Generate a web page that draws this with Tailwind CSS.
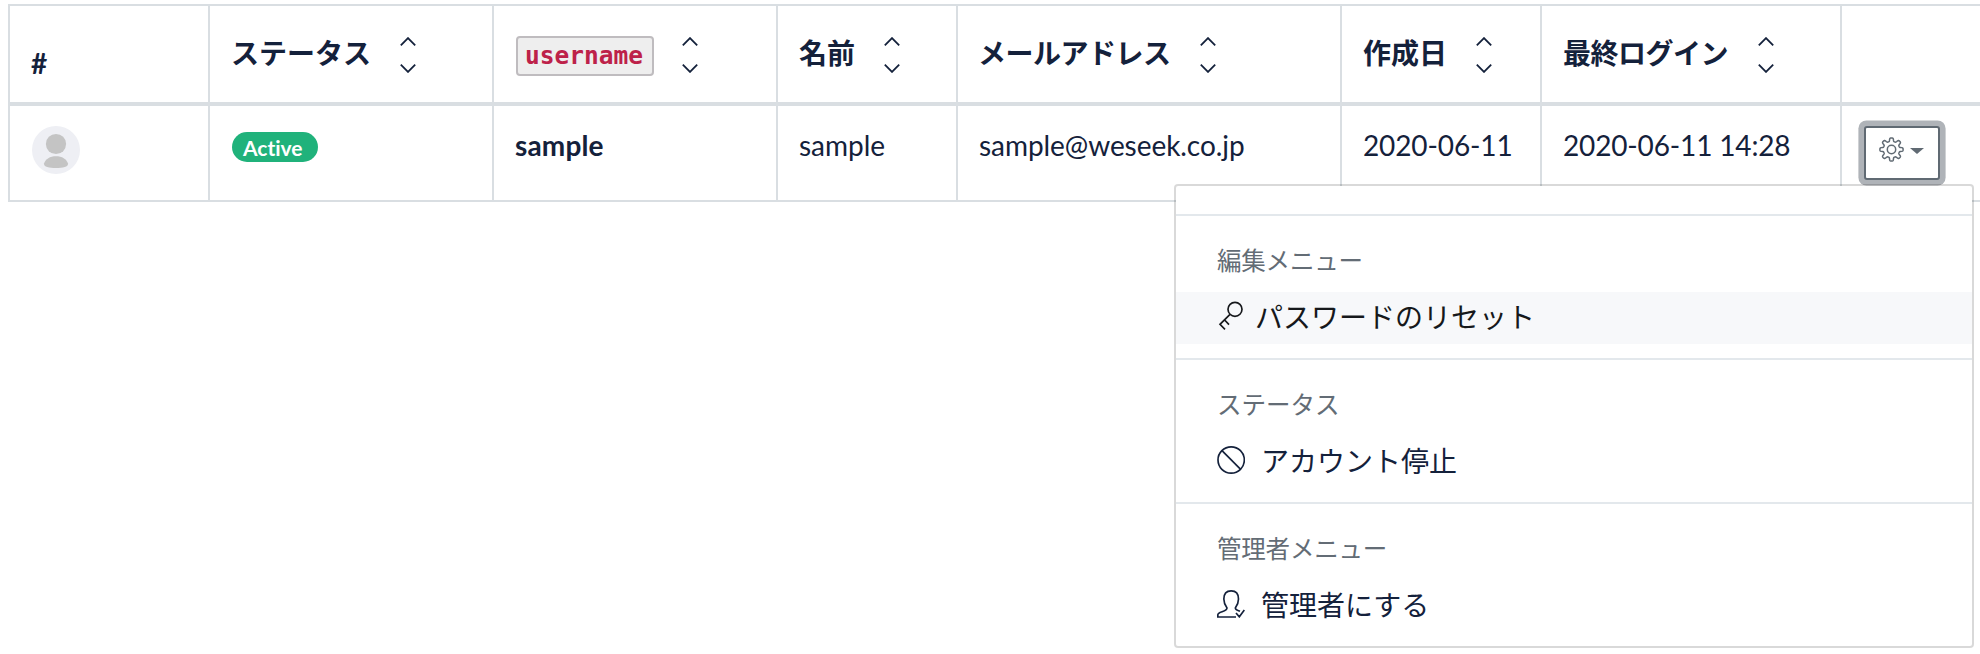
<!DOCTYPE html>
<html lang="ja">
<head>
<meta charset="utf-8">
<title>Users</title>
<script src="https://cdn.jsdelivr.net/npm/@tailwindcss/browser@4"></script>
</head>
<body class="relative h-[654px] w-[1980px] overflow-hidden bg-white font-['Lato','Noto_Sans_CJK_JP',sans-serif] text-[28px] leading-[42px] text-[#14213b]">
<svg class="hidden">
  <symbol id="sort" viewBox="0 0 16 36"><path d="M.8 8.3 8 1.1l7.2 7.2M.8 27.7 8 34.9l7.2-7.2" fill="none" stroke="currentColor" stroke-width="1.8"/></symbol>
</svg>
<main class="ml-2 pt-1">
  <div class="grid h-[102px] grid-cols-[200px_284px_284px_180px_384px_200px_300px_140px] border-t-2 border-b-4 border-[#d9dee2] font-bold whitespace-nowrap">
    <div class="border-l-2 border-[#d9dee2] pt-[36px] pl-[21px]">#</div>
    <div class="flex items-start border-l-2 border-[#d9dee2] pl-[21px]"><span class="mt-[26px] w-[169px]">ステータス</span><svg class="mt-[31px] h-9 w-4"><use href="#sort"/></svg></div>
    <div class="flex items-start border-l-2 border-[#d9dee2] pl-[22px]"><span class="w-[166px] pt-[30px]"><code class="block h-10 w-[138px] rounded-[4px] border-2 border-[#bfbcbf] bg-[#eee] pl-[7px] font-['DejaVu_Sans_Mono',monospace] text-[24.5px] leading-[36px] text-[#bd2149]">username</code></span><svg class="mt-[31px] h-9 w-4"><use href="#sort"/></svg></div>
    <div class="flex items-start border-l-2 border-[#d9dee2] pl-[21px]"><span class="mt-[26px] w-[85px]">名前</span><svg class="mt-[31px] h-9 w-4"><use href="#sort"/></svg></div>
    <div class="flex items-start border-l-2 border-[#d9dee2] pl-[20px]"><span class="mt-[26px] w-[222px] tracking-[-0.5px]">メールアドレス</span><svg class="mt-[31px] h-9 w-4"><use href="#sort"/></svg></div>
    <div class="flex items-start border-l-2 border-[#d9dee2] pl-[21px]"><span class="mt-[26px] w-[113px]">作成日</span><svg class="mt-[31px] h-9 w-4"><use href="#sort"/></svg></div>
    <div class="flex items-start border-l-2 border-[#d9dee2] pl-[21px]"><span class="mt-[26px] w-[195px] tracking-[-0.5px]">最終ログイン</span><svg class="mt-[31px] h-9 w-4"><use href="#sort"/></svg></div>
    <div class="border-l-2 border-[#d9dee2]"></div>
  </div>
  <div class="grid h-[96px] grid-cols-[200px_284px_284px_180px_384px_200px_300px_140px] border-b-2 border-[#d9dee2] whitespace-nowrap">
    <div class="border-l-2 border-[#d9dee2] pt-5 pl-[22px]">
      <svg class="size-12" viewBox="0 0 48 48"><circle cx="24" cy="24" r="24" fill="#eeeff4"/><circle cx="24" cy="18" r="10.1" fill="#c4c4c4"/><path d="M12 37.5C13.5 32.800 18 30.200 24 30.200S34.500 32.800 36 37.500C36.300 41 31 42 24 42S11.700 41 12 37.500Z" fill="#c4c4c4"/></svg>
    </div>
    <div class="border-l-2 border-[#d9dee2] pt-[26px] pl-[22px]"><div class="h-[30px] w-[86px] rounded-full bg-[#20b27b] pl-[11px] text-[21px] leading-[32px] font-bold text-white [font-variant-ligatures:none]">Active</div></div>
    <div class="border-l-2 border-[#d9dee2] pt-[18px] pl-[21px] font-bold tracking-[0.15px]">sample</div>
    <div class="border-l-2 border-[#d9dee2] pt-[18px] pl-[21px]">sample</div>
    <div class="border-l-2 border-[#d9dee2] pt-[18px] pl-[21px] tracking-[-0.06px]">sample@weseek.co.jp</div>
    <div class="border-l-2 border-[#d9dee2] pt-[18px] pl-[21px] tracking-[-0.12px]">2020-06-11</div>
    <div class="border-l-2 border-[#d9dee2] pt-[18px] pl-[21px] tracking-[-0.15px]">2020-06-11 14:28</div>
    <div class="border-l-2 border-[#d9dee2] pt-5 pl-[22px]">
      <button class="flex h-[54px] w-[76px] items-start rounded-[3px] border-2 border-[#606a73] bg-white pt-[9px] pl-[13px] text-[#606a73] shadow-[0_0_0_5.6px_#afb3b8]">
        <svg class="h-[25px] w-[25px]" viewBox="-12.5 -12.500 25 25" fill="none" stroke="currentColor" stroke-width="1.5"><circle r="4.2"/><path id="gear" stroke-linejoin="round"/></svg>
        <svg class="mt-[11px] ml-[6px] h-[6px] w-[14px]" viewBox="0 0 14 6"><path d="M0 0H14L7 6Z" fill="currentColor"/></svg>
      </button>
    </div>
  </div>
</main>
<div class="absolute top-[184px] left-[1174px] h-[464px] w-[800px] rounded-[4px] border-2 border-black/15 bg-white bg-clip-padding pt-7 whitespace-nowrap">
  <section class="h-36 border-t-2 border-[#e3e8ec] pt-[14px]">
    <h6 class="h-[62px] pl-[41px] text-[24.5px] leading-[62px] tracking-[-0.2px] text-[#636c75]">編集メニュー</h6>
    <a class="flex h-[52px] items-start bg-[#f7f8fa] pl-[41px] text-[#16181b]">
      <svg class="mt-[9px] h-[30px] w-[28px] shrink-0" viewBox="171 363 84 90" fill="none" stroke="currentColor" stroke-width="5"><circle cx="225" cy="388" r="21"/><path d="M210 403 180 433l15 15M194 420l13 14"/></svg>
      <span class="ml-[10px] leading-[50px]">パスワードのリセット</span>
    </a>
  </section>
  <section class="h-36 border-t-2 border-[#e3e8ec] pt-[14px]">
    <h6 class="h-[62px] pl-[41px] text-[24.5px] leading-[62px] text-[#636c75]">ステータス</h6>
    <a class="flex h-[52px] items-start pl-[41px]">
      <svg class="mt-[10px] size-[28px] shrink-0" viewBox="171 138 84 84" fill="none" stroke="currentColor" stroke-width="5"><circle cx="213.500" cy="180" r="39.500"/><path d="M186 152 242 208"/></svg>
      <span class="ml-[16px] leading-[50px]">アカウント停止</span>
    </a>
  </section>
  <section class="h-36 border-t-2 border-[#e3e8ec] pt-[14px]">
    <h6 class="h-[62px] pl-[41px] text-[24.5px] leading-[62px] tracking-[-0.2px] text-[#636c75]">管理者メニュー</h6>
    <a class="flex h-[52px] items-start pl-[41px]">
      <svg class="mt-[10px] size-[28px] shrink-0" viewBox="171 570 84 84" fill="none" stroke="currentColor" stroke-width="5"><path d="M228 651H173.500V644C173.500 634 201 636 201 624C195 616 191.500 610 191.500 597C191.500 581 200 572.500 213.500 572.500S235.500 581 235.500 597C235.500 610 232 616 226 624C226 630 233 631 240 634M228 639l10 11.500L253 630"/></svg>
      <span class="ml-[16px] leading-[50px]">管理者にする</span>
    </a>
  </section>
</div>
<script>
  // Eight-toothed gear outline: smooth radius that alternates between tooth and valley.
  let d = '';
  for (let i = 0; i < 240; i++) {
    const a = i / 240 * Math.PI * 2;
    const w = Math.tanh(2.2 * Math.cos(8 * a)) / Math.tanh(2.2);
    const r = 9.900 + 1.700 * w;
    d += (i ? 'L' : 'M') + (r * Math.cos(a)).toFixed(2) + ' ' + (r * Math.sin(a)).toFixed(2);
  }
  document.getElementById('gear').setAttribute('d', d + 'Z');
</script>
</body>
</html>
